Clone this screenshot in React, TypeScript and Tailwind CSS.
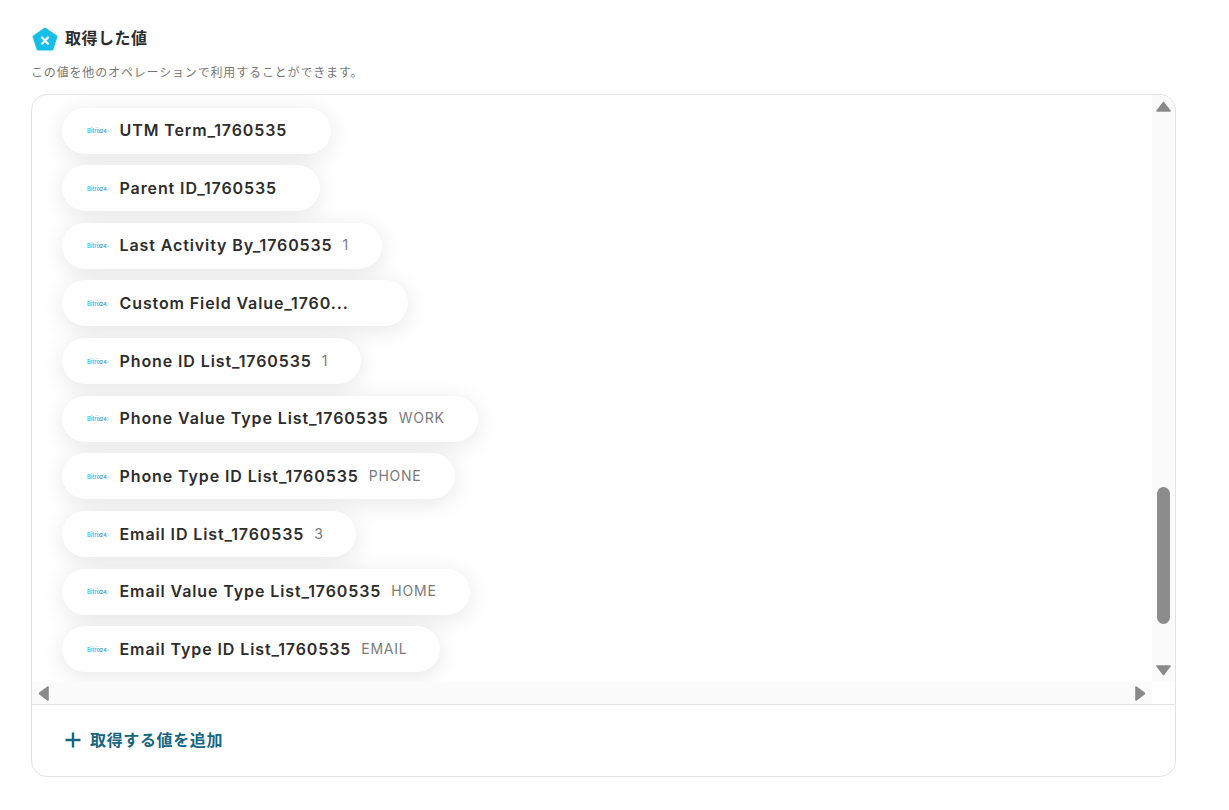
const rows: [string, string | null, number][] = [
  ["UTM Term_1760535", null, 269],
  ["Parent ID_1760535", null, 258],
  ["Last Activity By_1760535", "1", 320],
  ["Custom Field Value_1760...", null, 346],
  ["Phone ID List_1760535", "1", 299],
  ["Phone Value Type List_1760535", "WORK", 416],
  ["Phone Type ID List_1760535", "PHONE", 393],
  ["Email ID List_1760535", "3", 294],
  ["Email Value Type List_1760535", "HOME", 408],
  ["Email Type ID List_1760535", "EMAIL", 378],
];

function Logo() {
  return (
    <svg width="22" height="8" viewBox="0 0 22 8" className="shrink-0 translate-y-[1px]">
      <text x="0" y="6" fontSize="5.6" fontWeight="600" fontFamily="Inter, sans-serif" fill="#1fc3f5">Bitrix</text>
      <text x="13" y="6" fontSize="5.2" fontFamily="Inter, sans-serif" fontWeight="600" fill="#4f8fbd">24</text>
      <circle cx="20.3" cy="4.2" r="1.3" fill="none" stroke="#a5e2f6" strokeWidth="0.6" />
    </svg>
  );
}

function Tri({ dir }: { dir: "up" | "down" | "left" | "right" }) {
  const pts = {
    up: "7.5,1.5 14,10 1,10",
    down: "1,1 14,1 7.5,9.5",
    left: "10,1 10,14 1.5,7.5",
    right: "1,1 1,14 9.5,7.5",
  }[dir];
  const vertical = dir === "up" || dir === "down";
  return (
    <svg width={vertical ? 15 : 11} height={vertical ? 11 : 15} viewBox={vertical ? "0 0 15 11" : "0 0 11 15"} className="shrink-0 block">
      <polygon points={pts} fill="#8a8a8a" stroke="#8a8a8a" strokeWidth="1.6" strokeLinejoin="round" />
    </svg>
  );
}

export default function App() {
  return (
    <div className="w-[1229px] h-[810px] bg-white pl-[31px] pt-[26px] font-['Inter','Noto_Sans_CJK_JP',sans-serif] overflow-hidden">
      <div className="flex items-center gap-[7px] h-[26px]">
        <svg width="26" height="26" viewBox="0 0 26 26" className="block ml-[1px] shrink-0">
          <path d="M13 2.5 L24.5 10.5 L20.3 23.5 L5.7 23.5 L1.5 10.5 Z" fill="#16bfe9" stroke="#16bfe9" strokeWidth="2" strokeLinejoin="round" />
          <path d="M10 11.5 L16 17.7 M16 11.5 L10 17.7" stroke="#fff" strokeWidth="2.2" strokeLinecap="round" />
        </svg>
        <div className="text-base font-semibold text-[#2d2d2d] tracking-[0.03em] leading-6 pb-[2px]">取得した値</div>
      </div>
      <div className="mt-[9px] text-xs text-[#777777] tracking-[0.07em] leading-[24px] h-[24px]">この値を他のオペレーションで利用することができます。</div>
      <div className="mt-[9px] w-[1145px] h-[683px] border border-[#e3e3e3] rounded-2xl overflow-hidden flex flex-col">
        <div className="flex h-[609px]">
          <div className="flex-1 flex flex-col min-w-0">
            <div className="h-[587px] pl-[30px] pt-[12.5px] flex flex-col gap-[11.67px] overflow-hidden">
              {rows.map(([label, value, w]) => (
                <div
                  key={label}
                  style={{ width: w }}
                  className="h-[46px] shrink-0 rounded-full bg-white shadow-[0_4px_24px_rgba(0,0,0,0.1)] flex items-center pl-[25px] pb-[1px]"
                >
                  <Logo />
                  <span className="ml-[10.5px] text-base font-semibold text-[#2d2d2d] tracking-[0.056em] whitespace-nowrap">{label}</span>
                  {value && <span className="ml-[10px] text-sm text-[#7a7a7a] tracking-[0.055em]">{value}</span>}
                </div>
              ))}
            </div>
            <div className="h-[22px] bg-[#fbfbfb] flex items-center justify-between pl-[6px] pr-[6px]">
              <Tri dir="left" />
              <Tri dir="right" />
            </div>
          </div>
          <div className="w-[23px] bg-[#fbfbfb] flex flex-col items-center pt-[6px] h-[587px]">
            <Tri dir="up" />
            <div className="mt-[375px] w-[13px] h-[137px] rounded-full bg-[#8c8c8c]" />
            <div className="mt-[41px]"><Tri dir="down" /></div>
          </div>
        </div>
        <div className="flex-1 border-t border-[#e3e3e3] flex items-center pl-[32px] pb-[2px] text-[#15667f]">
          <svg width="18" height="18" viewBox="0 0 18 18" className="block shrink-0">
            <path d="M9 1.5 V16.5 M1.5 9 H16.5" stroke="currentColor" strokeWidth="2.4" />
          </svg>
          <span className="ml-[8px] text-base font-semibold tracking-[0.04em]">取得する値を追加</span>
        </div>
      </div>
    </div>
  );
}
